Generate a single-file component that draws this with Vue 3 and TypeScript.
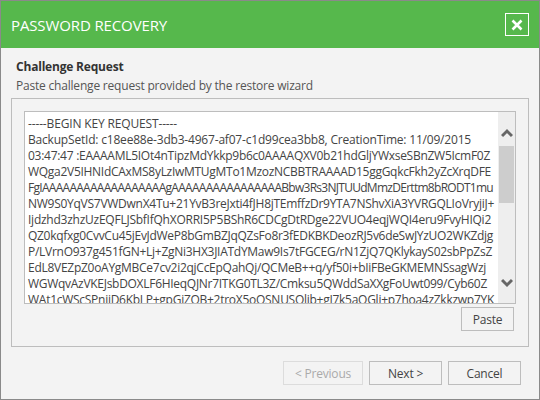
<script setup lang="ts">
import { nextTick, onMounted, ref } from 'vue'

interface KeyLine {
  text: string
  width: number
}

const keyLines: KeyLine[] = [
  { text: '-----BEGIN KEY REQUEST-----', width: 149 },
  { text: 'BackupSetId: c18ee88e-3db3-4967-af07-c1d99cea3bb8, CreationTime: 11/09/2015', width: 443 },
  { text: '03:47:47 :EAAAAML5IOt4nTipzMdYkkp9b6c0AAAAQXV0b21hdGljYWxseSBnZW5IcmF0Z', width: 462 },
  { text: 'WQga2V5IHNIdCAxMS8yLzIwMTUgMTo1MzozNCBBTRAAAAD15ggGqkcFkh2yZcXrqDFE', width: 463 },
  { text: 'FgIAAAAAAAAAAAAAAAAAAgAAAAAAAAAAAAAAAABbw3Rs3NJTUUdMmzDErttm8bRODT1mu', width: 465 },
  { text: 'NW9S0YqVS7VWDwnX4Tu+21YvB3reJxti4fJH8jTEmffzDr9YTA7NShvXiA3YVRGQLIoVryjiJ+', width: 466 },
  { text: 'Ijdzhd3zhzUzEQFLJSbfIfQhXORRI5P5BShR6CDCgDtRDge22VUO4eqjWQI4eru9FvyHIQi2', width: 463 },
  { text: 'QZ0kqfxg0CvvCu45jEvJdWeP8bGmBZJqQZsFo8r3fEDKBKDeozRJ5v6deSwJYzUO2WKZdjg', width: 465 },
  { text: 'P/LVrnO937g451fGN+Lj+ZgNi3HX3JIATdYMaw9Is7tFGCEG/rN1ZjQ7QKlykayS02sbPpZsZ', width: 464 },
  { text: 'EdL8VEZpZ0oAYgMBCe7cv2i2qjCcEpQahQj/QCMeB++q/yf50i+bIiFBeGKMEMNSsagWzj', width: 458 },
  { text: 'WGWqvAzVKEJsbDOXLF6HIeqQJNr7ITKG0TL3Z/Cmksu5QWddSaXXgFoUwt099/Cyb60Z', width: 459 },
  { text: 'WAt1cWScSPniiD6KbLP+gpGiZOB+2troX5oOSNUSOlib+gI7k5aOGli+p7hoa4zZkkzwp7YK', width: 466 },
]

const spacing = ref<number[]>(keyLines.map(() => 0))
const spans = ref<HTMLElement[]>([])

onMounted(async () => {
  await nextTick()
  spacing.value = keyLines.map((line, i) => {
    const el = spans.value[i]
    if (!el) return 0
    return (line.width - el.getBoundingClientRect().width) / line.text.length
  })
})
</script>

<template>
  <div class="window">
    <header class="titlebar">
      <span class="title">PASSWORD RECOVERY</span>
      <button class="close" aria-label="Close">
        <svg width="12" height="12" viewBox="0 0 12 12">
          <path d="M1.5 1.5 L10.5 10.5 M10.5 1.5 L1.5 10.5" stroke="#fff" stroke-width="2.6" fill="none" />
        </svg>
      </button>
    </header>
    <main class="body">
      <h1 class="heading">Challenge Request</h1>
      <p class="sub">Paste challenge request provided by the restore wizard</p>
      <section class="group">
        <div class="field">
          <div class="text">
            <div v-for="(line, i) in keyLines" :key="i" class="line">
              <span ref="spans" :style="{ letterSpacing: spacing[i] + 'px' }">{{ line.text }}</span>
            </div>
          </div>
          <div class="scrollbar">
            <svg class="arrow up" width="12" height="10" viewBox="0 0 12 10">
              <path d="M1 8 L6 3 L11 8" stroke="#666" stroke-width="3" fill="none" />
            </svg>
            <div class="track"><div class="thumb"></div></div>
            <svg class="arrow down" width="12" height="10" viewBox="0 0 12 10">
              <path d="M1 2 L6 7 L11 2" stroke="#666" stroke-width="3" fill="none" />
            </svg>
          </div>
        </div>
        <div class="paste-row">
          <button class="btn paste">Paste</button>
        </div>
      </section>
      <footer class="footer">
        <button class="btn prev" disabled>&lt; Previous</button>
        <button class="btn next">Next &gt;</button>
        <button class="btn cancel">Cancel</button>
      </footer>
    </main>
  </div>
</template>

<style>
html, body { margin: 0; padding: 0; }
</style>

<style scoped>
.window {
  width: 540px;
  height: 400px;
  box-sizing: border-box;
  border: 1px solid #8a8a8a;
  background: #f3f3f3;
  display: flex;
  flex-direction: column;
  font-family: "Open Sans", "Noto Sans", sans-serif;
  font-size: 12px;
  letter-spacing: -0.2px;
  color: #444;
  overflow: hidden;
}
.titlebar {
  height: 47px;
  flex: none;
  background: #56b84c;
  display: flex;
  align-items: center;
  justify-content: space-between;
  padding: 0 10px 0 10px;
}
.title { color: #fff; font-size: 15px; letter-spacing: -0.12px; }
.close {
  width: 24px;
  height: 23px;
  box-sizing: border-box;
  padding: 0;
  background: transparent;
  border: 1px solid #fff;
  display: flex;
  align-items: center;
  justify-content: center;
}
.body {
  flex: 1;
  min-height: 0;
  display: flex;
  flex-direction: column;
  padding: 10px 10px 13px;
}
.heading {
  margin: 0 0 0 5px;
  font-size: 12px;
  line-height: 17px;
  font-weight: 700;
  color: #333;
}
.sub {
  margin: 2px 0 0 5px;
  line-height: 17px;
  color: #555;
}
.group {
  margin-top: 4px;
  height: 249px;
  box-sizing: border-box;
  border: 1px solid #bdbdbd;
  padding: 12px 12px 0;
  display: flex;
  flex-direction: column;
}
.field {
  height: 193px;
  box-sizing: border-box;
  flex: none;
  border: 1px solid #bdbdbd;
  background: #fff;
  display: flex;
  overflow: hidden;
}
.text {
  flex: 1;
  min-width: 0;
  padding: 4px 0 0 3px;
  overflow: hidden;
  white-space: pre;
  color: #444;
}
.line { line-height: 16px; height: 16px; }
.scrollbar {
  width: 17px;
  flex: none;
  background: #eeeeee;
  display: flex;
  flex-direction: column;
  align-items: center;
}
.arrow { flex: none; }
.arrow.up { margin: 16px 0 8px; }
.arrow.down { margin: 8px 0 15px; }
.track {
  flex: 1;
  width: 100%;
  min-height: 0;
  box-sizing: border-box;
  padding: 0 1px;
}
.thumb {
  width: 100%;
  height: 57px;
  background: #cdcdcd;
}
.paste-row {
  display: flex;
  justify-content: flex-end;
  margin-top: 3px;
  padding-right: 2px;
}
.btn {
  box-sizing: border-box;
  height: 24px;
  padding: 0;
  background: #f3f3f3;
  border: 1px solid #bdbdbd;
  font: inherit;
  letter-spacing: inherit;
  color: #444;
}
.paste { width: 53px; }
.footer {
  display: flex;
  justify-content: flex-end;
  gap: 6px;
  margin-top: 14px;
  padding-right: 8px;
}
.prev { width: 80px; color: #aaa; border-color: #dcdcdc; }
.next { width: 73px; }
.cancel { width: 73px; }
</style>
